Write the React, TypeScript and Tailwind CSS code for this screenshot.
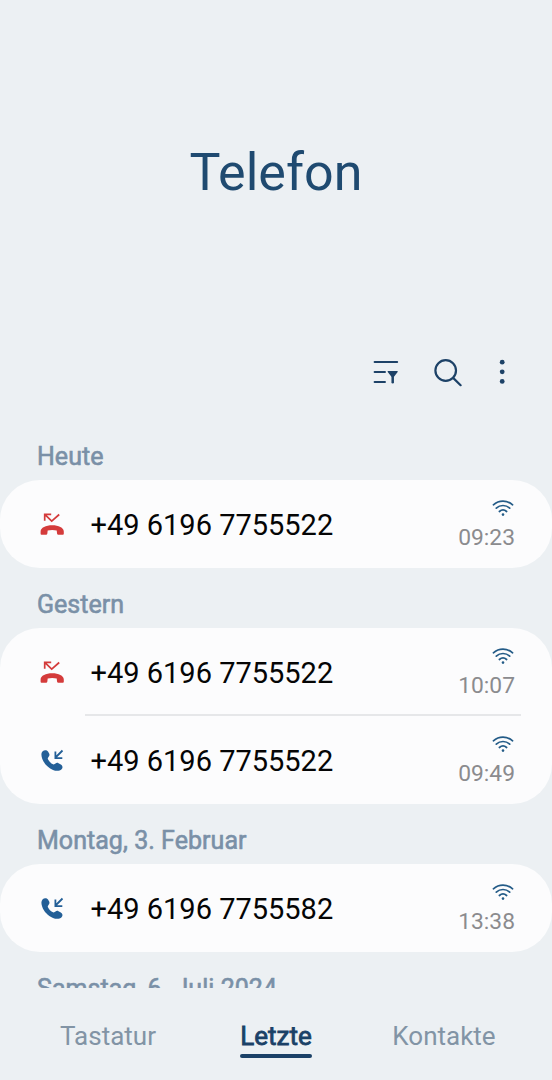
import React from 'react';

type CallType = 'missed' | 'incoming';

type Call = {
  number: string;
  time: string;
  type: CallType;
};

const groups: { label: string; calls: Call[] }[] = [
  {
    label: 'Heute',
    calls: [{ number: '+49 6196 7755522', time: '09:23', type: 'missed' }],
  },
  {
    label: 'Gestern',
    calls: [
      { number: '+49 6196 7755522', time: '10:07', type: 'missed' },
      { number: '+49 6196 7755522', time: '09:49', type: 'incoming' },
    ],
  },
  {
    label: 'Montag, 3. Februar',
    calls: [{ number: '+49 6196 7755582', time: '13:38', type: 'incoming' }],
  },
  { label: 'Samstag, 6. Juli 2024', calls: [] },
];

const FilterIcon = () => (
  <svg width="26" height="26" viewBox="0 0 26 26" fill="none" stroke="currentColor" strokeWidth="2.2" strokeLinecap="round">
    <path d="M1.7 3h22.4M1.7 13h10.2M1.7 23h10.2" />
    <path d="M15.3 12.6h8.8l-3.5 4.4h-1.8z" fill="currentColor" strokeWidth="1.4" strokeLinejoin="round" />
    <path d="M19.7 15v8.2" strokeWidth="2.5" />
  </svg>
);

const SearchIcon = () => (
  <svg width="28" height="28" viewBox="0 0 28 28" fill="none" stroke="currentColor" strokeWidth="2.2" strokeLinecap="round">
    <circle cx="11.7" cy="11.5" r="10.3" />
    <path d="M19.1 18.9l7.5 7.3" />
  </svg>
);

const MoreIcon = () => (
  <svg width="6" height="26" viewBox="0 0 6 26" fill="currentColor">
    <circle cx="3.2" cy="3.2" r="2.4" />
    <circle cx="3.2" cy="12.8" r="2.4" />
    <circle cx="3.2" cy="22.4" r="2.4" />
  </svg>
);

const MissedIcon = () => (
  <svg width="24" height="24" viewBox="0 0 24 24" className="text-[#d43b3b]">
    <path d="M4.7 8.8V2.4h6.5M5 2.7l6.7 6.5 7.5-6.7" fill="none" stroke="currentColor" strokeWidth="1.7" />
    <path
      d="M1.5 22.8c-.6 0-.9-.4-.9-1v-2.3c0-3.7 5.300-6.200 11.600-6.200s11.600 2.500 11.600 6.200v2.300c0 .6-.3 1-.9 1h-4.600c-.7 0-1.100-.4-1.200-1l-.4-3.200c-2.600-.8-6.400-.8-9 0l-.4 3.200c-.1.600-.5 1-1.200 1z"
      fill="currentColor"
    />
  </svg>
);

const IncomingIcon = () => (
  <svg width="24" height="24" viewBox="0 0 24 24" className="text-[#235f97]">
    <path d="M22.5 2.5l-7 7M15.4 3.4v6.700h6.900" fill="none" stroke="currentColor" strokeWidth="1.800" />
    <path
      d="M2.700 3.300C4.100 1.800 6.800 1.800 8 3.600l1 1.700c.7 1.100.6 2.300-.2 3.300l-.6.8c-.6.700-.5 1.400-.1 2.200 1.100 2 2.500 3.500 4.400 4.500.8.400 1.500.4 2.200-.1l.8-.6c.9-.7 2-.8 3-.2l2.300 1.400c1.900 1.100 2.300 3.200.8 4.600-2 1.900-5.400 2-8.600.700C7.900 19.700 3.900 15.400 2.300 10.900 1.300 8.100.8 5.300 2.700 3.300z"
      fill="currentColor"
    />
  </svg>
);

const WifiIcon = () => (
  <svg width="22" height="18" viewBox="0 0 22 18" className="text-[#235b87]" fill="none" stroke="currentColor" strokeWidth="1.7" strokeLinecap="round">
    <path d="M1.4 5.8C6.900.9 15.100.9 20.600 5.800M4.300 9.200c3.800-3.600 9.600-3.600 13.400 0M7.400 12.500c2.100-1.900 5.100-1.900 7.200 0" />
    <circle cx="11" cy="15.6" r="1.3" fill="currentColor" stroke="none" />
  </svg>
);

const CallRow = ({ call, divided }: { call: Call; divided: boolean }) => {
  return (
    <li className="relative flex h-[88px] items-center pr-[37px] pl-10">
      {divided && <div className="absolute top-[-2px] right-[31px] left-[85px] h-[2px] bg-[#e6e7e9]" />}
      {call.type === 'missed' ? <MissedIcon /> : <IncomingIcon />}
      <span className="ml-[26.5px] pt-[2px] text-[29px] leading-8 text-[#050505]">{call.number}</span>
      <div className="ml-auto flex flex-col items-end pt-[2px]">
        <div className="pr-[1px]">
          <WifiIcon />
        </div>
        <span className="mt-[7px] text-[22.8px] leading-7 text-[#8b8b8e]">{call.time}</span>
      </div>
    </li>
  );
};

const App = () => {
  return (
    <div className="flex h-[1080px] w-[552px] flex-col overflow-hidden bg-[#ecf0f3] font-['Roboto',sans-serif]">
      <header className="flex h-[344px] shrink-0 items-center justify-center pt-[2px]">
        <h1 className="text-[52px] leading-none text-[#1f4a70]">Telefon</h1>
      </header>

      <div className="flex h-[76px] shrink-0 items-start justify-end pt-[15px] pr-[47px] text-[#1d4267]">
        <button className="mr-[35px]">
          <FilterIcon />
        </button>
        <button className="mr-[37px]">
          <SearchIcon />
        </button>
        <button>
          <MoreIcon />
        </button>
      </div>

      <main className="min-h-0 flex-1 overflow-hidden">
        {groups.map((group) => (
          <section key={group.label}>
            <h2 className="flex h-[60px] items-center pt-3 pl-[37px] text-[25px] leading-none tracking-[0.04px] text-[#7a90a7] [-webkit-text-stroke:0.6px_#7a90a7]">
              {group.label}
            </h2>
            <ul className="rounded-[40px] bg-[#fcfcfd]">
              {group.calls.map((call, i) => (
                <CallRow key={call.time} call={call} divided={i > 0} />
              ))}
            </ul>
          </section>
        ))}
      </main>

      <nav className="flex h-[92px] shrink-0 justify-center pt-[32px] text-[26px] leading-8 text-[#8294a5]">
        <button className="flex w-[168px] flex-col items-center">Tastatur</button>
        <button className="flex w-[168px] flex-col items-center text-[#1b4167] [-webkit-text-stroke:0.8px_#1b4167]">
          Letzte
          <span className="mt-[2px] h-1 w-[72px] rounded-full bg-[#1b4167]" />
        </button>
        <button className="flex w-[168px] flex-col items-center">Kontakte</button>
      </nav>
    </div>
  );
};

export default App;
